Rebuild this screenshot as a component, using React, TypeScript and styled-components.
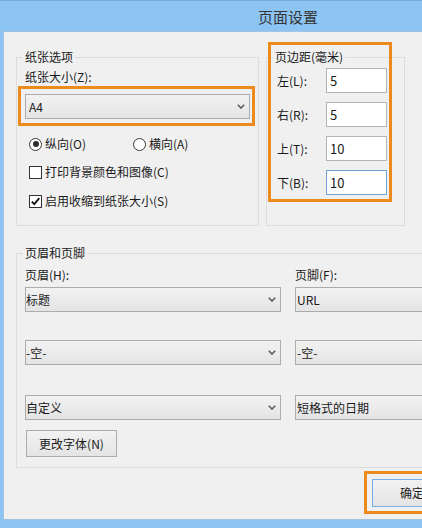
import React from 'react'
import styled, { createGlobalStyle } from 'styled-components'

const GlobalStyle = createGlobalStyle`
  html, body {
    margin: 0;
    padding: 0;
    overflow: hidden;
    background: #8cc4f4;
  }
  body {
    font-family: "Noto Sans CJK SC", "Noto Sans", sans-serif;
    font-size: 12px;
    color: #1a1a1a;
  }
`

const Window = styled.div`
  width: 576px;
  height: 528px;
  box-sizing: border-box;
  background: #8cc4f4;
  border-top: 1px solid #74acdf;
  display: flex;
  flex-direction: column;
`

const TitleBar = styled.div`
  height: 30px;
  display: flex;
  align-items: center;
  justify-content: center;
  font-size: 15px;
  color: #353535;
  padding-top: 1px;
  box-sizing: border-box;
`

const Client = styled.div`
  height: 489px;
  margin: 0 3px;
  box-sizing: border-box;
  border: 1px solid #a3c2e0;
  background: #f0f0f0;
  padding: 0 12px 5px;
  display: flex;
  flex-direction: column;
`

const TopRow = styled.div`
  display: flex;
  gap: 7px;
  margin-top: 25px;
  height: 169px;
`

const GroupBox = styled.div<{ $width?: number }>`
  position: relative;
  box-sizing: border-box;
  width: ${p => (p.$width ? `${p.$width}px` : 'auto')};
  border: 1px solid #dcdcdc;
  padding: 0 8px;
  display: flex;
  flex-direction: column;
`

const Legend = styled.div`
  width: fit-content;
  margin: -9px 0 0 -2px;
  padding: 0 2px;
  line-height: 16px;
  background: #f0f0f0;
`

const FieldLabel = styled.div<{ $top?: number }>`
  line-height: 16px;
  margin-top: ${p => p.$top ?? 0}px;
`

const SelectHighlight = styled.div`
  margin: 1px -5px 0 -7px;
  border: 3px solid #ec8a1c;
  padding: 5px 2px 4px 4px;
`

const Select = styled.div<{ $pad?: number }>`
  height: 25px;
  box-sizing: border-box;
  border: 1px solid #acacac;
  background: linear-gradient(#f2f2f2, #e4e4e4);
  display: flex;
  align-items: center;
  justify-content: space-between;
  padding: 0 4px 0 ${p => p.$pad ?? 3}px;
  white-space: nowrap;
`

const RadioRow = styled.div`
  display: grid;
  grid-template-columns: 104px auto;
  margin-top: 10px;
  padding-left: 4px;
`

const OptionItem = styled.label<{ $top?: number }>`
  display: flex;
  align-items: center;
  gap: 3px;
  height: 16px;
  line-height: 16px;
  margin-top: ${p => p.$top ?? 0}px;
`

const CheckRow = styled(OptionItem)`
  padding-left: 4px;
`

const RadioCircle = styled.span<{ $checked?: boolean }>`
  width: 13px;
  height: 13px;
  box-sizing: border-box;
  border-radius: 50%;
  border: 1px solid #3a3a3a;
  background: #fff;
  display: inline-flex;
  align-items: center;
  justify-content: center;

  &::after {
    content: '';
    width: 6px;
    height: 6px;
    border-radius: 50%;
    background: ${p => (p.$checked ? '#2c2c2c' : 'transparent')};
  }
`

const CheckSquare = styled.span`
  width: 13px;
  height: 13px;
  box-sizing: border-box;
  border: 1px solid #333;
  background: #fff;
  display: inline-flex;
  align-items: center;
  justify-content: center;
`

const MarginRows = styled.div`
  display: flex;
  flex-direction: column;
  gap: 9px;
  margin-top: 3px;
`

const MarginRow = styled.div`
  display: grid;
  grid-template-columns: 49px 61px;
  align-items: center;
  padding-left: 2px;
`

const TextInput = styled.div<{ $focused?: boolean }>`
  height: 25px;
  box-sizing: border-box;
  border: 1px solid ${p => (p.$focused ? '#6fa3d6' : '#b4b4b4')};
  background: #fff;
  padding-left: 3px;
  display: flex;
  align-items: center;
  font-size: 13px;
`

const MarginHighlight = styled.div`
  position: absolute;
  left: 1px;
  top: -16px;
  width: 124px;
  height: 160px;
  box-sizing: border-box;
  border: 3px solid #ec8a1c;
  pointer-events: none;
`

const HeaderFooterGroup = styled(GroupBox)`
  margin-top: 27px;
  height: 215px;
`

const HFRow = styled.div<{ $top: number }>`
  display: grid;
  grid-template-columns: 256px 256px;
  column-gap: 14px;
  margin-top: ${p => p.$top}px;
`

const Button = styled.button<{ $default?: boolean; $width?: number }>`
  box-sizing: border-box;
  height: ${p => (p.$default ? 28 : 27)}px;
  width: ${p => p.$width ?? 80}px;
  border: 1px solid ${p => (p.$default ? '#78aee5' : '#acacac')};
  background: linear-gradient(#f2f2f2, #e4e4e4);
  font-family: inherit;
  font-size: 12px;
  color: #1a1a1a;
  padding: 0;
  line-height: 16px;
`

const FontButton = styled(Button)`
  margin-top: 10px;
  margin-left: 1px;
`

const ButtonBar = styled.div`
  display: flex;
  justify-content: flex-end;
  align-items: center;
  gap: 20px;
  margin-top: 3px;
`

const ButtonHighlight = styled.div`
  border: 3px solid #ec8a1c;
  padding: 5px 5px 4px;
  display: flex;
`

const Chevron = () => (
  <svg width="8" height="5" viewBox="0 0 8 5">
    <path d="M0.8 0.8 L4 4 L7.2 0.8" fill="none" stroke="#5c5c5c" strokeWidth="1.6" />
  </svg>
)

const Check = () => (
  <svg width="11" height="11" viewBox="0 0 11 11">
    <path d="M1.8 5.6 L4.3 8.2 L9.3 2.2" fill="none" stroke="#111" strokeWidth="1.8" />
  </svg>
)

const margins = [
  { label: '左(L):', value: '5' },
  { label: '右(R):', value: '5' },
  { label: '上(T):', value: '10' },
  { label: '下(B):', value: '10', focused: true },
]

const headerFooterRows = [
  { top: 4, header: '标题', footer: 'URL' },
  { top: 28, header: '-空-', footer: '-空-' },
  { top: 30, header: '自定义', footer: '短格式的日期' },
]

export default function App() {
  return (
    <>
      <GlobalStyle />
      <Window>
        <TitleBar>页面设置</TitleBar>
        <Client>
          <TopRow>
            <GroupBox $width={243}>
              <Legend>纸张选项</Legend>
              <FieldLabel $top={4}>纸张大小(Z):</FieldLabel>
              <SelectHighlight>
                <Select>
                  <span>A4</span>
                  <Chevron />
                </Select>
              </SelectHighlight>
              <RadioRow>
                <OptionItem>
                  <RadioCircle $checked />
                  纵向(O)
                </OptionItem>
                <OptionItem>
                  <RadioCircle />
                  横向(A)
                </OptionItem>
              </RadioRow>
              <CheckRow $top={12}>
                <CheckSquare />
                打印背景颜色和图像(C)
              </CheckRow>
              <CheckRow $top={13}>
                <CheckSquare>
                  <Check />
                </CheckSquare>
                启用收缩到纸张大小(S)
              </CheckRow>
            </GroupBox>

            <GroupBox $width={139}>
              <Legend>页边距(毫米)</Legend>
              <MarginRows>
                {margins.map(m => (
                  <MarginRow key={m.label}>
                    <span>{m.label}</span>
                    <TextInput $focused={m.focused}>{m.value}</TextInput>
                  </MarginRow>
                ))}
              </MarginRows>
              <MarginHighlight />
            </GroupBox>
          </TopRow>

          <HeaderFooterGroup>
            <Legend>页眉和页脚</Legend>
            <HFRow $top={6}>
              <FieldLabel>页眉(H):</FieldLabel>
              <FieldLabel>页脚(F):</FieldLabel>
            </HFRow>
            {headerFooterRows.map(r => (
              <HFRow key={r.header} $top={r.top}>
                <Select $pad={0}>
                  <span>{r.header}</span>
                  <Chevron />
                </Select>
                <Select $pad={1}>
                  <span>{r.footer}</span>
                  <Chevron />
                </Select>
              </HFRow>
            ))}
            <div>
              <FontButton $width={91}>更改字体(N)</FontButton>
            </div>
          </HeaderFooterGroup>

          <ButtonBar>
            <ButtonHighlight>
              <Button $default>确定</Button>
            </ButtonHighlight>
            <Button>取消</Button>
          </ButtonBar>
        </Client>
      </Window>
    </>
  )
}
